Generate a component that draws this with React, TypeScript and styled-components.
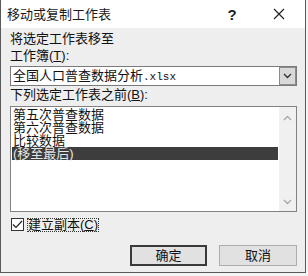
import React from "react";
import styled, { createGlobalStyle } from "styled-components";

const GlobalStyle = createGlobalStyle`
  html, body { margin: 0; padding: 0; background: #f4f4f4; }
  body { font-family: "Liberation Sans", "Noto Sans CJK SC", sans-serif; }
  * { box-sizing: border-box; }
`;

const Dialog = styled.div`
  width: 306px;
  height: 273px;
  border: 1px solid #5a5a5a;
  border-top: none;
  display: flex;
  flex-direction: column;
  background: #eeeeee;
  color: #111;
  font-size: 13px;
`;

const TitleBar = styled.div`
  height: 28px;
  flex: none;
  background: #fff;
  display: flex;
  align-items: center;
  padding-left: 6px;
`;

const Title = styled.span`
  flex: 1;
  font-size: 13px;
  line-height: 17px;
  color: #1a1a1a;
`;

const HelpButton = styled.span`
  width: 22px;
  text-align: center;
  font-size: 15px;
  font-weight: bold;
  color: #222;
  margin-right: 14px;
`;

const CloseButton = styled.span`
  width: 44px;
  margin-right: 4px;
  display: flex;
  justify-content: center;
`;

const Body = styled.div`
  flex: 1;
  display: flex;
  flex-direction: column;
  padding: 2px 8px 6px 9px;
`;

const Label = styled.div`
  line-height: 17px;
  height: 17px;
  white-space: nowrap;
`;

const Combo = styled.div`
  margin-top: 2px;
  height: 20px;
  border: 1px solid #7a7a7a;
  background: #fff;
  display: flex;
  align-items: stretch;
`;

const ComboText = styled.div`
  flex: 1;
  padding-left: 2px;
  line-height: 18px;
  white-space: nowrap;
`;

const Ext = styled.span`
  font-family: "Liberation Mono", monospace;
  font-size: 11px;
`;

const ComboButton = styled.div`
  width: 17px;
  background: #d9d9d9;
  border: 1px solid #8c8c8c;
  margin: 0;
  display: flex;
  align-items: center;
  justify-content: center;
`;

const ListBox = styled.div`
  margin-top: 3px;
  height: 106px;
  border: 1px solid #828282;
  background: #fff;
  display: flex;
`;

const Items = styled.div`
  flex: 1;
  padding: 1px 1px 0 1px;
  display: flex;
  flex-direction: column;
`;

const Item = styled.div<{ $selected?: boolean }>`
  height: 13px;
  line-height: 13px;
  padding-left: 1px;
  white-space: nowrap;
  background: ${(p) => (p.$selected ? "#3d3d3d" : "transparent")};
  color: ${(p) => (p.$selected ? "#e6e6e6" : "#111")};
`;

const ScrollBar = styled.div`
  width: 17px;
  background: #f0f0f0;
  display: flex;
  flex-direction: column;
  justify-content: space-between;
  align-items: center;
  padding: 8px 0 6px;
`;

const CheckRow = styled.div`
  margin-top: 5px;
  height: 15px;
  display: flex;
  align-items: center;
  padding-left: 1px;
`;

const CheckBox = styled.div`
  width: 13px;
  height: 13px;
  border: 1px solid #333;
  background: #fff;
  display: flex;
  align-items: center;
  justify-content: center;
`;

const CheckLabel = styled.span`
  margin-left: 3px;
  padding: 0 1px;
  line-height: 14px;
  outline: 1px dotted #333;
  outline-offset: -1px;
`;

const ButtonRow = styled.div`
  margin-top: auto;
  display: flex;
  justify-content: flex-end;
  gap: 12px;
`;

const Button = styled.div<{ $default?: boolean }>`
  width: ${(p) => (p.$default ? "77px" : "78px")};
  height: 21px;
  background: #e1e1e1;
  border: ${(p) => (p.$default ? "2px solid #3a3a3a" : "1px solid #adadad")};
  display: flex;
  align-items: center;
  justify-content: center;
  line-height: 15px;
`;

const Chevron = ({ up, color }: { up?: boolean; color: string }) => (
  <svg width="9" height="6" viewBox="0 0 9 6">
    <path
      d={up ? "M1 5 L4.5 1.5 L8 5" : "M1 1 L4.5 4.5 L8 1"}
      fill="none"
      stroke={color}
      strokeWidth="1.4"
    />
  </svg>
);

export default function App() {
  return (
    <>
      <GlobalStyle />
      <Dialog>
        <TitleBar>
          <Title>移动或复制工作表</Title>
          <HelpButton>?</HelpButton>
          <CloseButton>
            <svg width="12" height="12" viewBox="0 0 12 12">
              <path d="M1 1 L11 11 M11 1 L1 11" stroke="#222" strokeWidth="1.2" />
            </svg>
          </CloseButton>
        </TitleBar>
        <Body>
          <Label>将选定工作表移至</Label>
          <Label>
            工作簿(<u>T</u>):
          </Label>
          <Combo>
            <ComboText>
              全国人口普查数据分析<Ext>.xlsx</Ext>
            </ComboText>
            <ComboButton>
              <Chevron color="#333" />
            </ComboButton>
          </Combo>
          <Label>
            下列选定工作表之前(<u>B</u>):
          </Label>
          <ListBox>
            <Items>
              <Item>第五次普查数据</Item>
              <Item>第六次普查数据</Item>
              <Item>比较数据</Item>
              <Item $selected>(移至最后)</Item>
            </Items>
            <ScrollBar>
              <Chevron up color="#a8a8a8" />
              <Chevron color="#a8a8a8" />
            </ScrollBar>
          </ListBox>
          <CheckRow>
            <CheckBox>
              <svg width="11" height="9" viewBox="0 0 11 9">
                <path d="M1 4.5 L4 7.5 L10 1" fill="none" stroke="#222" strokeWidth="1.2" />
              </svg>
            </CheckBox>
            <CheckLabel>
              建立副本(<u>C</u>)
            </CheckLabel>
          </CheckRow>
          <ButtonRow>
            <Button $default>确定</Button>
            <Button>取消</Button>
          </ButtonRow>
        </Body>
      </Dialog>
    </>
  );
}
